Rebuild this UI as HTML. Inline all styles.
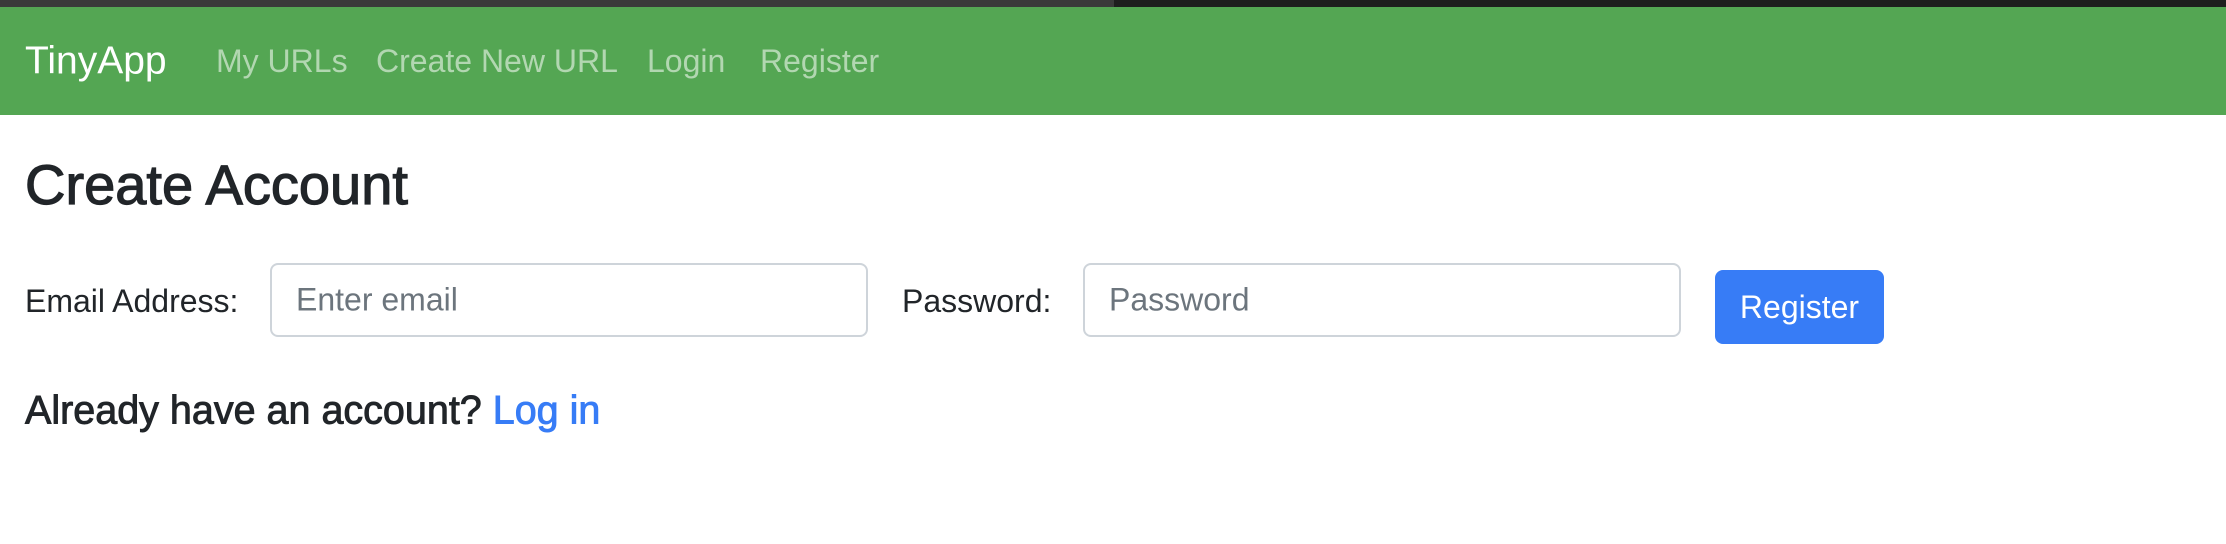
<!DOCTYPE html>
<html><head><meta charset="utf-8"><style>
*{margin:0;padding:0;box-sizing:border-box}
body{width:2226px;height:544px;background:#fff;font-family:"Liberation Sans",sans-serif;color:#212529;position:relative;overflow:hidden}
.top{position:absolute;left:0;top:0;width:2226px;height:7px;background:#1e1e1e}
.top i{position:absolute;left:0;top:0;width:1114px;height:7px;background:#3a3a3a}
.nav{position:absolute;left:0;top:7px;width:2226px;height:108px;background:#54a653}
.t{position:absolute;white-space:nowrap;line-height:1}
.nl{color:rgba(255,255,255,.55);font-size:32px;top:61px;transform:translateY(-50%)}
.inp{position:absolute;border:2px solid #ced4da;border-radius:8px;background:#fff;height:74px;top:263px}
.inp span{position:absolute;left:24px;top:50%;transform:translateY(-50%);font-size:32px;color:#6c757d}
.btn{position:absolute;left:1715px;top:270px;width:169px;height:74px;background:#377cf6;border-radius:8px;color:#fff;font-size:32px;display:flex;align-items:center;justify-content:center}
.med{-webkit-text-stroke:1.2px currentColor}
</style></head><body>
<div class="top"><i></i></div>
<div class="nav"></div>
<div class="t" style="left:25px;top:61px;transform:translateY(-50%);font-size:39px;color:#fff">TinyApp</div>
<div class="t nl" style="left:216px">My URLs</div>
<div class="t nl" style="left:376px">Create New URL</div>
<div class="t nl" style="left:647px">Login</div>
<div class="t nl" style="left:760px">Register</div>
<div class="t med" style="left:25px;top:185px;transform:translateY(-50%);font-size:56px">Create Account</div>
<div class="t" style="left:25px;top:301px;transform:translateY(-50%);font-size:32px">Email Address:</div>
<div class="inp" style="left:270px;width:598px"><span>Enter email</span></div>
<div class="t" style="left:902px;top:301px;transform:translateY(-50%);font-size:32px">Password:</div>
<div class="inp" style="left:1083px;width:598px"><span>Password</span></div>
<div class="btn">Register</div>
<div class="t med" style="left:25px;top:411px;transform:translateY(-50%);font-size:39.5px;-webkit-text-stroke-width:0.9px">Already have an account? <span style="color:#377cf6">Log in</span></div>
</body></html>
